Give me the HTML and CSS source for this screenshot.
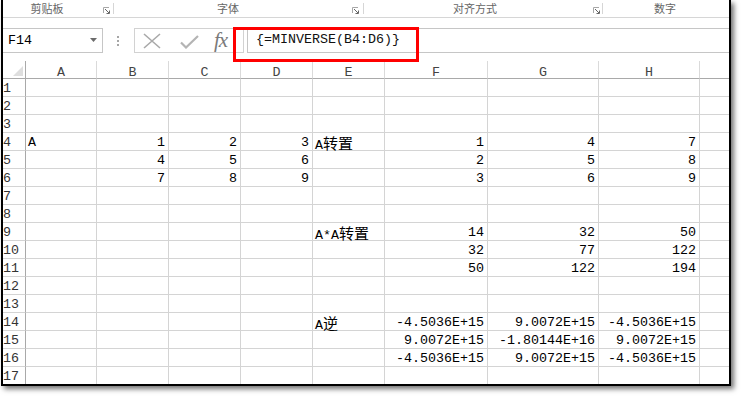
FILE: index.html
```html
<!DOCTYPE html>
<html>
<head>
<meta charset="utf-8">
<link rel="stylesheet" href="styles.css">
</head>
<body>
<div class="win">
  <div class="ribbon">
    <div class="grp g1"><span class="lbl">剪贴板</span><svg class="launch" width="7" height="7" viewBox="0 0 7 7"><path d="M0.5 6V0.5H6" fill="none" stroke="#a8a8a8"/><path d="M2 2L6 6M3.5 6.5H6.5V3.5" fill="none" stroke="#666"/></svg><span class="sep"></span></div>
    <div class="grp g2"><span class="lbl">字体</span><svg class="launch" width="7" height="7" viewBox="0 0 7 7"><path d="M0.5 6V0.5H6" fill="none" stroke="#a8a8a8"/><path d="M2 2L6 6M3.5 6.5H6.5V3.5" fill="none" stroke="#666"/></svg><span class="sep"></span></div>
    <div class="grp g3"><span class="lbl">对齐方式</span><svg class="launch" width="7" height="7" viewBox="0 0 7 7"><path d="M0.5 6V0.5H6" fill="none" stroke="#a8a8a8"/><path d="M2 2L6 6M3.5 6.5H6.5V3.5" fill="none" stroke="#666"/></svg><span class="sep"></span></div>
    <div class="grp g4"><span class="lbl">数字</span></div>
  </div>
  <div class="fbar">
    <div class="namebox"><span>F14</span><svg class="caret" width="7" height="4" viewBox="0 0 7 4"><path d="M0 0H7L3.5 4Z" fill="#6b6b6b"/></svg></div>
    <div class="grip"><i></i><i></i><i></i></div>
    <div class="btns">
      <svg class="xbtn" width="18" height="16" viewBox="0 0 18 16"><path d="M1 1L17 15M17 1L1 15" stroke="#a9a9a9" stroke-width="1.6" fill="none"/></svg>
      <svg class="okbtn" width="19" height="14" viewBox="0 0 19 14"><path d="M1 7.5L6 12.5L18 1" stroke="#b4b4b4" stroke-width="2.2" fill="none"/></svg>
      <span class="fx">fx</span>
    </div>
    <div class="formula">{=MINVERSE(B4:D6)}</div>
  </div>
  <div class="sheet">
    <div class="row hdr"><span class="corner"><svg width="10" height="10" viewBox="0 0 10 10"><path d="M10 0V10H0Z" fill="#dedede"/></svg></span><span>A</span><span>B</span><span>C</span><span>D</span><span>E</span><span>F</span><span>G</span><span>H</span><span></span></div>
    <div class="row"><b>1</b><span></span><span></span><span></span><span></span><span></span><span></span><span></span><span></span><span></span></div>
    <div class="row"><b>2</b><span></span><span></span><span></span><span></span><span></span><span></span><span></span><span></span><span></span></div>
    <div class="row"><b>3</b><span></span><span></span><span></span><span></span><span></span><span></span><span></span><span></span><span></span></div>
    <div class="row"><b>4</b><span>A</span><span class="n">1</span><span class="n">2</span><span class="n">3</span><span>A<span class="cjk">转置</span></span><span class="n">1</span><span class="n">4</span><span class="n">7</span><span></span></div>
    <div class="row"><b>5</b><span></span><span class="n">4</span><span class="n">5</span><span class="n">6</span><span></span><span class="n">2</span><span class="n">5</span><span class="n">8</span><span></span></div>
    <div class="row"><b>6</b><span></span><span class="n">7</span><span class="n">8</span><span class="n">9</span><span></span><span class="n">3</span><span class="n">6</span><span class="n">9</span><span></span></div>
    <div class="row"><b>7</b><span></span><span></span><span></span><span></span><span></span><span></span><span></span><span></span><span></span></div>
    <div class="row"><b>8</b><span></span><span></span><span></span><span></span><span></span><span></span><span></span><span></span><span></span></div>
    <div class="row"><b>9</b><span></span><span></span><span></span><span></span><span>A*A<span class="cjk">转置</span></span><span class="n">14</span><span class="n">32</span><span class="n">50</span><span></span></div>
    <div class="row"><b>10</b><span></span><span></span><span></span><span></span><span></span><span class="n">32</span><span class="n">77</span><span class="n">122</span><span></span></div>
    <div class="row"><b>11</b><span></span><span></span><span></span><span></span><span></span><span class="n">50</span><span class="n">122</span><span class="n">194</span><span></span></div>
    <div class="row"><b>12</b><span></span><span></span><span></span><span></span><span></span><span></span><span></span><span></span><span></span></div>
    <div class="row"><b>13</b><span></span><span></span><span></span><span></span><span></span><span></span><span></span><span></span><span></span></div>
    <div class="row"><b>14</b><span></span><span></span><span></span><span></span><span>A<span class="cjk">逆</span></span><span class="n">-4.5036E+15</span><span class="n">9.0072E+15</span><span class="n">-4.5036E+15</span><span></span></div>
    <div class="row"><b>15</b><span></span><span></span><span></span><span></span><span></span><span class="n">9.0072E+15</span><span class="n">-1.80144E+16</span><span class="n">9.0072E+15</span><span></span></div>
    <div class="row"><b>16</b><span></span><span></span><span></span><span></span><span></span><span class="n">-4.5036E+15</span><span class="n">9.0072E+15</span><span class="n">-4.5036E+15</span><span></span></div>
    <div class="row"><b>17</b><span></span><span></span><span></span><span></span><span></span><span></span><span></span><span></span><span></span></div>
  </div>
</div>
<div class="mark"></div>
</body>
</html>
```

FILE: styles.css
```css
html, body {
  margin: 0;
  padding: 0;
  background: #fff;
}
body {
  width: 742px;
  height: 396px;
  overflow: hidden;
  position: relative;
  font-family: "Liberation Mono", "Noto Sans CJK SC", monospace;
  font-size: 13.33px;
  color: #000;
}
.win {
  width: 726px;
  height: 384px;
  margin-left: 1px;
  border-left: 2px solid #000;
  border-right: 2px solid #000;
  border-bottom: 2px solid #000;
  box-shadow: 3px 3px 5px rgba(0, 0, 0, 0.55);
  overflow: hidden;
  background: #fff;
}
/* ribbon group labels */
.ribbon {
  display: flex;
  align-items: flex-start;
  height: 17px;
  border-bottom: 1px solid #d6d6d6;
}
.grp {
  display: flex;
  align-items: flex-start;
  height: 17px;
}
.lbl {
  font-family: "Noto Sans CJK SC", sans-serif;
  font-size: 11px;
  line-height: 16px;
  color: #666;
  text-align: center;
}
.launch {
  margin-top: 7px;
  flex: none;
}
.sep {
  width: 1px;
  height: 11px;
  margin-top: 3px;
  background: #d6d6d6;
}
.g1 .lbl { width: 88px; }
.g1 .launch { margin-left: 12px; }
.g1 .sep { margin-left: 3px; }
.g2 .lbl { width: 228px; }
.g2 .launch { margin-left: 10px; }
.g2 .sep { margin-left: 4px; }
.g3 .lbl { width: 222px; }
.g3 .launch { margin-left: 7px; }
.g3 .sep { margin-left: 2px; }
.g4 .lbl { width: 124px; }

/* formula bar */
.fbar {
  display: flex;
  height: 25px;
  margin-top: 10px;
}
.namebox {
  box-sizing: border-box;
  width: 100px;
  height: 25px;
  border: 1px solid #c6c6c6;
  border-left: none;
  display: flex;
  align-items: center;
  justify-content: space-between;
  padding: 0 5px 0 5px;
  line-height: 23px;
}
.caret { margin-top: -2px; }
.grip {
  margin-left: 14px;
  width: 3px;
  display: flex;
  flex-direction: column;
  justify-content: center;
  gap: 2px;
}
.grip i {
  display: block;
  width: 2px;
  height: 2px;
  background: #a6a6a6;
}
.btns {
  box-sizing: border-box;
  margin-left: 14px;
  width: 110px;
  height: 25px;
  border: 1px solid #d2d2d2;
  display: flex;
  align-items: center;
  padding-left: 8px;
}
.okbtn { margin-left: 19px; margin-top: 2px; }
.fx {
  margin-left: 15px;
  font-family: "Liberation Serif", serif;
  font-style: italic;
  font-size: 21px;
  line-height: 23px;
  color: #7a7a7a;
  letter-spacing: -1px;
}
.formula {
  box-sizing: border-box;
  flex: 1;
  margin-left: 3px;
  height: 25px;
  border: 1px solid #c6c6c6;
  border-right: none;
  padding-left: 8px;
  line-height: 22px;
  color: #111;
}

/* sheet grid */
.sheet {
  margin-top: 8px;
}
.row {
  display: grid;
  grid-template-columns: 23px 71px 72px 72px 72px 72px 103px 111px 101px 1fr;
  height: 18px;
}
.row > * {
  box-sizing: border-box;
  height: 18px;
  border-right: 1px solid #d4d4d4;
  border-bottom: 1px solid #d4d4d4;
  padding: 2px 3px 0 2px;
  line-height: 16px;
  white-space: nowrap;
  font-style: normal;
}
.row > :last-child { border-right: none; }
.row > b {
  font-weight: normal;
  padding: 2px 0 0 0;
  color: #333;
  border-right-color: #a9a9a9;
}
.n { text-align: right; }
.cjk {
  font-family: "Noto Sans CJK SC", sans-serif;
  font-size: 15px;
  padding: 0;
}
.hdr > * {
  border-bottom-color: #a9a9a9;
  border-right-color: #dadada;
  text-align: center;
  color: #444;
  padding: 5px 0 0 0;
  line-height: 14px;
}
.hdr > .corner {
  border-right-color: #a9a9a9;
  display: flex;
  justify-content: flex-end;
  align-items: flex-end;
  padding: 0 2px 2px 0;
}
.mark {
  position: absolute;
  left: 233px;
  top: 27px;
  width: 186px;
  height: 35px;
  box-sizing: border-box;
  border: 3px solid #f00;
}
```
